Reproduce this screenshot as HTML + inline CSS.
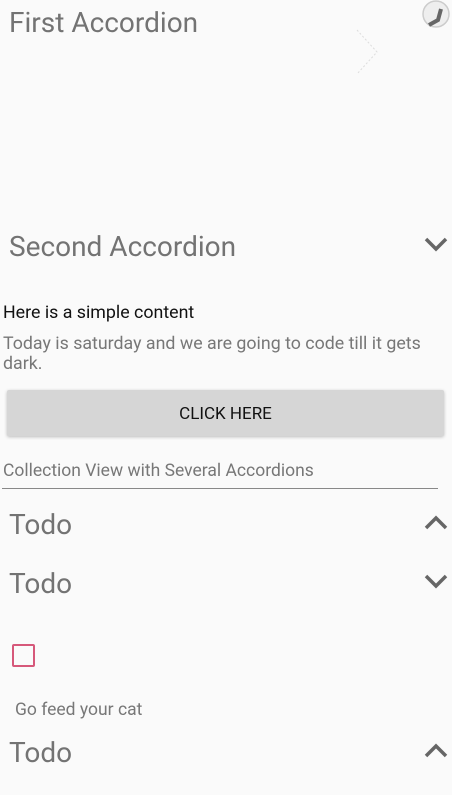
<!DOCTYPE html>
<html><head><style>
body{margin:0;width:452px;height:795px;background:#fafafa;font-family:"Roboto","Liberation Sans",sans-serif;position:relative;overflow:hidden}
.a{position:absolute;white-space:nowrap}
.h{font-size:28px;color:#737373;left:9px}
svg{position:absolute}
</style></head><body>
<div class="a h" style="top:6px">First Accordion</div>
<svg style="left:418px;top:0" width="34" height="30"><circle cx="18" cy="14" r="13" fill="#eee" stroke="#ccc" stroke-width="1.5"/><path d="M23 9 L20 20 L11 25" fill="none" stroke="#666" stroke-width="4"/></svg>
<svg style="left:355px;top:28px" width="26" height="48"><path d="M2 2 L22 24 L2 46" fill="none" stroke="#ddd" stroke-width="1" stroke-dasharray="2 2"/></svg>
<div class="a h" style="top:230px">Second Accordion</div>
<svg style="left:423px;top:236px" width="26" height="17"><path d="M3 3 L13 13 L23 3" fill="none" stroke="#666" stroke-width="3.5"/></svg>
<div class="a" style="left:3px;top:302px;font-size:17.8px;color:#111">Here is a simple content</div>
<div class="a" style="left:3px;top:334px;font-size:17.8px;color:#777;white-space:normal;width:440px;line-height:20px">Today is saturday and we are going to code till it gets dark.</div>
<div class="a" style="left:7px;top:390px;width:437px;height:46px;background:#d6d6d6;border-radius:2px;box-shadow:0 1px 3px rgba(0,0,0,.25);text-align:center;line-height:48px;font-size:17px;color:#111">CLICK HERE</div>
<div class="a" style="left:3px;top:461px;font-size:17.5px;color:#777">Collection View with Several Accordions</div>
<div class="a" style="left:2px;top:488px;width:436px;height:1px;background:#888"></div>
<div class="a h" style="top:508px">Todo</div>
<svg style="left:423px;top:514px" width="26" height="17"><path d="M3 14 L13 4 L23 14" fill="none" stroke="#666" stroke-width="3.5"/></svg>
<div class="a h" style="top:567px">Todo</div>
<svg style="left:423px;top:573px" width="26" height="17"><path d="M3 3 L13 13 L23 3" fill="none" stroke="#666" stroke-width="3.5"/></svg>
<div class="a" style="left:12px;top:644px;width:19px;height:19px;border:2px solid #d6587a;border-radius:2px"></div>
<div class="a" style="left:15px;top:700px;font-size:17.5px;color:#777">Go feed your cat</div>
<div class="a h" style="top:736px">Todo</div>
<svg style="left:423px;top:742px" width="26" height="17"><path d="M3 14 L13 4 L23 14" fill="none" stroke="#666" stroke-width="3.5"/></svg>
</body></html>
